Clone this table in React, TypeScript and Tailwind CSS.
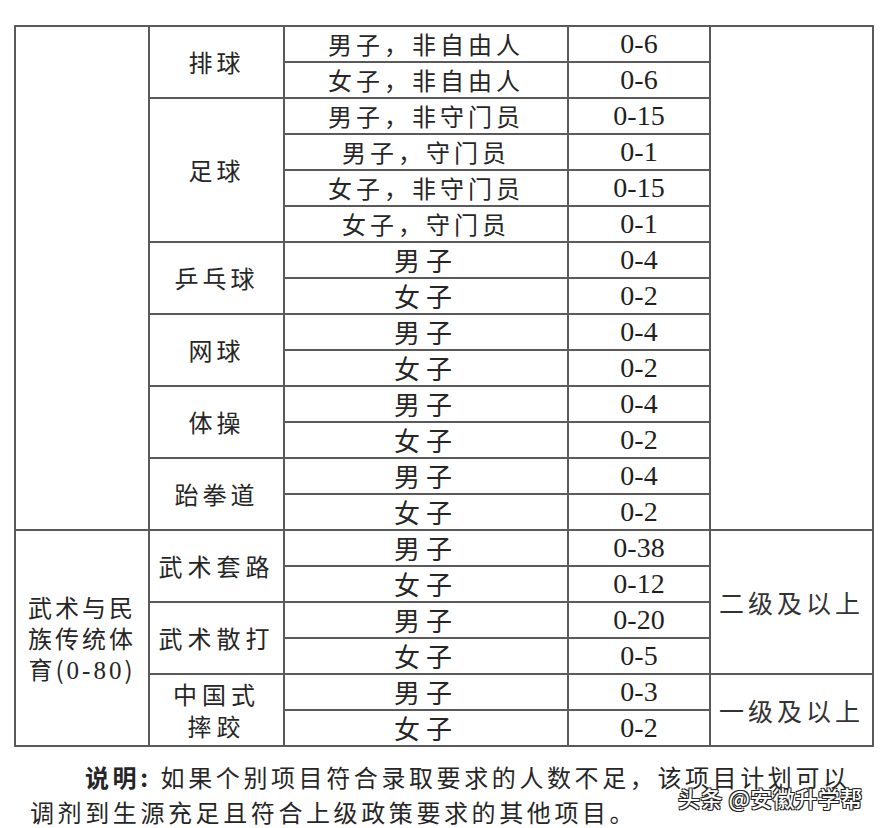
import React from "react";

type Row = {
  sub: string;
  num: string;
  big?: boolean;
};

type Group = {
  name: React.ReactNode;
  rows: Row[];
};

const cjk = "font-['Noto_Sans_CJK_SC',sans-serif]";
const serif = "font-['Liberation_Serif',serif]";
const cell = "border-2 border-[#5a5a5a] p-0 text-center align-middle leading-none";

const groups: Group[] = [
  {
    name: "排球",
    rows: [
      { sub: "男子，非自由人", num: "0-6" },
      { sub: "女子，非自由人", num: "0-6" },
    ],
  },
  {
    name: "足球",
    rows: [
      { sub: "男子，非守门员", num: "0-15" },
      { sub: "男子，守门员", num: "0-1" },
      { sub: "女子，非守门员", num: "0-15" },
      { sub: "女子，守门员", num: "0-1" },
    ],
  },
  {
    name: "乒乓球",
    rows: [
      { sub: "男子", num: "0-4", big: true },
      { sub: "女子", num: "0-2", big: true },
    ],
  },
  {
    name: "网球",
    rows: [
      { sub: "男子", num: "0-4", big: true },
      { sub: "女子", num: "0-2", big: true },
    ],
  },
  {
    name: "体操",
    rows: [
      { sub: "男子", num: "0-4", big: true },
      { sub: "女子", num: "0-2", big: true },
    ],
  },
  {
    name: "跆拳道",
    rows: [
      { sub: "男子", num: "0-4", big: true },
      { sub: "女子", num: "0-2", big: true },
    ],
  },
];

const wushu: Group[] = [
  {
    name: "武术套路",
    rows: [
      { sub: "男子", num: "0-38", big: true },
      { sub: "女子", num: "0-12", big: true },
    ],
  },
  {
    name: "武术散打",
    rows: [
      { sub: "男子", num: "0-20", big: true },
      { sub: "女子", num: "0-5", big: true },
    ],
  },
  {
    name: (
      <span className="block leading-[32px]">
        中国式
        <br />
        摔跤
      </span>
    ),
    rows: [
      { sub: "男子", num: "0-3", big: true },
      { sub: "女子", num: "0-2", big: true },
    ],
  },
];

function SubCell({ row }: { row: Row }) {
  return (
    <td className={cell}>
      <span
        className={`${cjk} inline-block leading-[30px] text-[#262626] ${
          row.big ? "text-[26px] tracking-[6px]" : "text-[24px] tracking-[4px]"
        }`}
      >
        {row.sub}
      </span>
    </td>
  );
}

function NumCell({ row }: { row: Row }) {
  return (
    <td className={cell}>
      <span className={`${serif} inline-block text-[28px] leading-[30px] text-[#1f1f1f]`}>
        {row.num}
      </span>
    </td>
  );
}

export default function App() {
  const upperCount = groups.reduce((n, g) => n + g.rows.length, 0);

  return (
    <div className="relative w-[883px] h-[828px] bg-white overflow-hidden">
      <div className="pt-[25px] pl-[14px]">
        <table className="border-collapse table-fixed w-[858px]">
          <colgroup>
            <col className="w-[134px]" />
            <col className="w-[135px]" />
            <col className="w-[284px]" />
            <col className="w-[142px]" />
            <col className="w-[163px]" />
          </colgroup>
          <tbody>
            {groups.map((g, gi) =>
              g.rows.map((r, ri) => (
                <tr key={`${gi}-${ri}`} className="h-[36px]">
                  {gi === 0 && ri === 0 && <td className={cell} rowSpan={upperCount} />}
                  {ri === 0 && (
                    <td className={cell} rowSpan={g.rows.length}>
                      <span
                        className={`${cjk} inline-block leading-[30px] text-[24px] tracking-[4px] text-[#262626]`}
                      >
                        {g.name}
                      </span>
                    </td>
                  )}
                  <SubCell row={r} />
                  <NumCell row={r} />
                  {gi === 0 && ri === 0 && <td className={cell} rowSpan={upperCount} />}
                </tr>
              ))
            )}
            {wushu.map((g, gi) =>
              g.rows.map((r, ri) => (
                <tr key={`w${gi}-${ri}`} className="h-[36px]">
                  {gi === 0 && ri === 0 && (
                    <td className={cell} rowSpan={6}>
                      <span
                        className={`${cjk} block whitespace-nowrap text-[24px] leading-[31px] tracking-[3px] text-[#262626]`}
                      >
                        武术与民
                        <br />
                        族传统体
                        <br />
                        育(
                        <span className={`${serif} text-[25px] tracking-[3px]`}>0-80</span>)
                      </span>
                    </td>
                  )}
                  {ri === 0 && (
                    <td className={cell} rowSpan={g.rows.length}>
                      <span
                        className={`${cjk} inline-block leading-[30px] text-[24px] tracking-[5px] text-[#262626]`}
                      >
                        {g.name}
                      </span>
                    </td>
                  )}
                  <SubCell row={r} />
                  <NumCell row={r} />
                  {gi === 0 && ri === 0 && (
                    <td className={cell} rowSpan={4}>
                      <span
                        className={`${cjk} inline-block leading-[30px] text-[25px] tracking-[4px] text-[#333]`}
                      >
                        二级及以上
                      </span>
                    </td>
                  )}
                  {gi === 2 && ri === 0 && (
                    <td className={cell} rowSpan={2}>
                      <span
                        className={`${cjk} inline-block leading-[30px] text-[25px] tracking-[4px] text-[#333]`}
                      >
                        一级及以上
                      </span>
                    </td>
                  )}
                </tr>
              ))
            )}
          </tbody>
        </table>
      </div>

      <div
        className={`${cjk} pl-[30px] pt-[12px] text-[24px] leading-[35px] tracking-[3.6px] text-[#262626] whitespace-nowrap`}
      >
        <div className="pl-[55px]">
          <span className="font-bold">说明:</span> 如果个别项目符合录取要求的人数不足，该项目计划可以
        </div>
        <div>调剂到生源充足且符合上级政策要求的其他项目。</div>
      </div>

      <div
        className={`${cjk} absolute left-[678px] top-[781px] text-[22px] tracking-[0.5px] font-medium text-white [text-shadow:1px_1px_0_#222,-1px_-1px_0_#222,1px_-1px_0_#222,-1px_1px_0_#222]`}
      >
        头条 @安徽升学帮
      </div>
    </div>
  );
}
